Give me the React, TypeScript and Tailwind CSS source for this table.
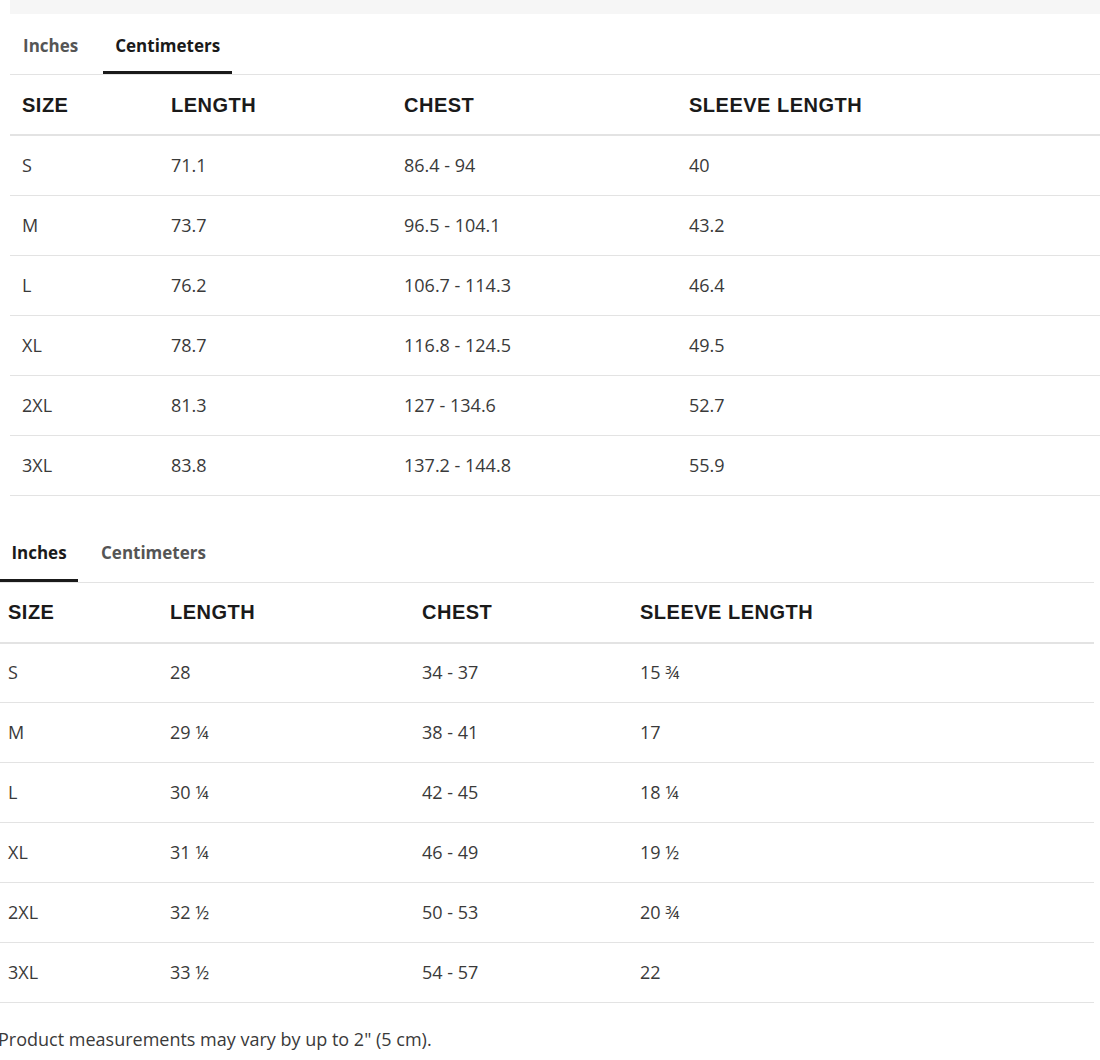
import React from "react";

type Row = [string, string, string, string];

const cmRows: Row[] = [
  ["S", "71.1", "86.4 - 94", "40"],
  ["M", "73.7", "96.5 - 104.1", "43.2"],
  ["L", "76.2", "106.7 - 114.3", "46.4"],
  ["XL", "78.7", "116.8 - 124.5", "49.5"],
  ["2XL", "81.3", "127 - 134.6", "52.7"],
  ["3XL", "83.8", "137.2 - 144.8", "55.9"],
];

const inRows: Row[] = [
  ["S", "28", "34 - 37", "15 ¾"],
  ["M", "29 ¼", "38 - 41", "17"],
  ["L", "30 ¼", "42 - 45", "18 ¼"],
  ["XL", "31 ¼", "46 - 49", "19 ½"],
  ["2XL", "32 ½", "50 - 53", "20 ¾"],
  ["3XL", "33 ½", "54 - 57", "22"],
];

const body = { fontFamily: "'Open Sans', Lato, sans-serif" };
const head = { fontFamily: "'Liberation Sans', Arial, sans-serif" };

function SizeTable({ rows, widths, pad }: { rows: Row[]; widths: string[]; pad: string }) {
  const headers = ["SIZE", "LENGTH", "CHEST", "SLEEVE LENGTH"];
  return (
    <table className="w-full table-fixed border-collapse">
      <colgroup>
        {widths.map((w, i) => (
          <col key={i} style={{ width: w }} />
        ))}
      </colgroup>
      <thead>
        <tr className="h-[60px] border-b-2 border-[#e3e3e3]">
          {headers.map((h) => (
            <th
              key={h}
              style={head}
              className={`${pad} text-left text-[20px] font-bold tracking-[0.5px] text-[#1a1a1a]`}
            >
              {h}
            </th>
          ))}
        </tr>
      </thead>
      <tbody>
        {rows.map((r) => (
          <tr key={r[0]} className="h-[60px] border-b border-[#e3e3e3]">
            {r.map((c, i) => (
              <td key={i} style={body} className={`${pad} text-[18px] text-[#3a3a3a]`}>
                {c}
              </td>
            ))}
          </tr>
        ))}
      </tbody>
    </table>
  );
}

export default function App() {
  return (
    <div className="w-[1100px] bg-white" style={body}>
      <div className="ml-[10px] h-[14px] bg-[#f6f6f6]" />
      {/* Section 1 */}
      <div className="ml-[10px] pt-[3px]">
        <div className="flex h-[58px] border-b border-[#e3e3e3]">
          <div className="ml-[1px] flex h-[57px] items-center px-[12px] text-[17px] font-bold text-[#555]">
            Inches
          </div>
          <div className="ml-[13px] flex h-[57px] items-center border-b-[3px] border-[#1a1a1a] px-[12px] pt-[3px] text-[17px] font-bold text-[#1a1a1a]">
            Centimeters
          </div>
        </div>
        <SizeTable rows={cmRows} widths={["149px", "233px", "285px", "423px"]} pad="pl-[12px]" />
      </div>
      {/* Section 2 */}
      <div className="mr-[6px] pt-[29px]">
        <div className="flex h-[58px] border-b border-[#e3e3e3]">
          <div className="flex h-[57px] w-[78px] items-center justify-center border-b-[3px] border-[#1a1a1a] pt-[3px] text-[17px] font-bold text-[#1a1a1a]">
            Inches
          </div>
          <div className="ml-[13px] flex h-[57px] items-center px-[10px] text-[17px] font-bold text-[#555]">
            Centimeters
          </div>
        </div>
        <SizeTable rows={inRows} widths={["162px", "252px", "218px", "462px"]} pad="pl-[8px]" />
      </div>
      <p className="-ml-[2px] pt-[23px] text-[18px] text-[#3a3a3a]">
        Product measurements may vary by up to 2" (5 cm).
      </p>
    </div>
  );
}
